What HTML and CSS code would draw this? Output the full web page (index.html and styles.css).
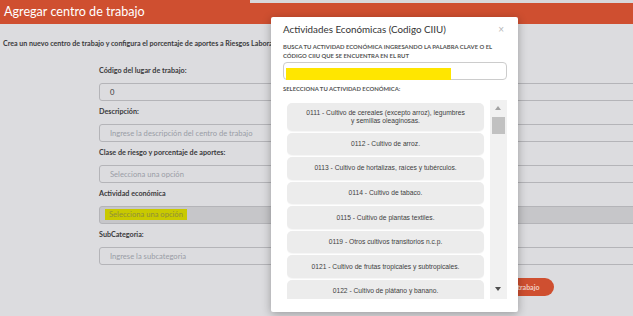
FILE: index.html
```html
<!DOCTYPE html>
<html lang="es">
<head>
    <meta charset="UTF-8">
    <meta name="viewport" content="width=device-width, initial-scale=1.0">
    <title>Agregar centro de trabajo</title>
    <link rel="stylesheet" href="styles.css">
</head>
<body>

<header class="topbar">
    <h1>Agregar centro de trabajo</h1>
</header>

<main class="page">
    <p class="intro">Crea un nuevo centro de trabajo y configura el porcentaje de aportes a Riesgos Laborales</p>

    <!-- Formulario del centro de trabajo -->
    <form class="form">
        <div class="field">
            <label>Código del lugar de trabajo:</label>
            <div class="input">0</div>
        </div>
        <div class="field">
            <label>Descripción:</label>
            <div class="input placeholder">Ingrese la descripción del centro de trabajo</div>
        </div>
        <div class="field">
            <label>Clase de riesgo y porcentaje de aportes:</label>
            <div class="input placeholder">Selecciona una opción</div>
        </div>
        <div class="field">
            <label>Actividad económica</label>
            <div class="input input-active"><span class="marker">Selecciona una opción</span></div>
        </div>
        <div class="field">
            <label>SubCategoria:</label>
            <div class="input placeholder">Ingrese la subcategoria</div>
        </div>
        <div class="actions">
            <button type="button" class="save-button">Agregar centro de trabajo</button>
        </div>
    </form>
</main>

<!-- Modal de actividades económicas -->
<div class="modal">
    <div class="modal-head">
        <h2>Actividades Económicas (Codigo CIIU)</h2>
        <span class="close">&times;</span>
    </div>
    <p class="hint">BUSCA TU ACTIVIDAD ECONÓMICA INGRESANDO LA PALABRA CLAVE O EL CÓDIGO CIIU QUE SE ENCUENTRA EN EL RUT</p>
    <div class="search"><span class="search-mark"></span></div>
    <p class="hint hint-list">SELECCIONA TU ACTIVIDAD ECONÓMICA:</p>

    <div class="list-box">
        <div class="list">
            <div class="item">0111 - Cultivo de cereales (excepto arroz), legumbres y semillas oleaginosas.</div>
            <div class="item">0112 - Cultivo de arroz.</div>
            <div class="item">0113 - Cultivo de hortalizas, raíces y tubérculos.</div>
            <div class="item">0114 - Cultivo de tabaco.</div>
            <div class="item">0115 - Cultivo de plantas textiles.</div>
            <div class="item">0119 - Otros cultivos transitorios n.c.p.</div>
            <div class="item">0121 - Cultivo de frutas tropicales y subtropicales.</div>
            <div class="item">0122 - Cultivo de plátano y banano.</div>
        </div>
        <div class="scrollbar">
            <span class="arrow arrow-up"></span>
            <span class="thumb"></span>
            <span class="arrow arrow-down"></span>
        </div>
    </div>
</div>

</body>
</html>
```

FILE: styles.css
```css
body {
    margin: 0;
    font-family: Lato, "Open Sans", sans-serif;
    background-color: #dcdcdf;
    overflow: hidden;
    height: 316px;
}
.topbar {
    height: 24px;
    background: linear-gradient(to right, #cf4f30 250px, #d8d8db 250px) top / 100% 3px no-repeat, #cf4f30;
}
.topbar h1 {
    margin: 0;
    padding: 3px 0 0 4px;
    font-size: 12.6px;
    font-weight: 400;
    line-height: 18px;
    color: #fff;
}
.page {
    padding-top: 15px;
}
.intro {
    margin: 0 0 0 3px;
    font-size: 7.1px;
    font-weight: 700;
    color: #3a3a3c;
    line-height: 10px;
    white-space: nowrap;
}
.form {
    margin: 17px 0 0 99px;
    width: 600px;
}
.field label {
    display: block;
    font-size: 7.2px;
    font-weight: 700;
    color: #3a3a3c;
    line-height: 10px;
    margin-bottom: 7px;
}
.input {
    height: 18px;
    box-sizing: border-box;
    border: 1px solid #b4b4b8;
    border-radius: 3px;
    padding-left: 10px;
    font-size: 7.6px;
    line-height: 16px;
    color: #3a3a3c;
    margin-bottom: 6px;
}
.placeholder {
    color: #9a9ca6;
}
.input-active {
    background-color: #c6c6c9;
    padding-left: 5px;
}
.marker {
    display: inline-block;
    background-color: #c9c900;
    color: #8f8f3a;
    padding: 0 4px;
    line-height: 11px;
    vertical-align: 1px;
}
.actions {
    padding-top: 3px;
}
.save-button {
    margin-left: 345px;
    height: 18px;
    padding: 0 15px 0 16px;
    border: none;
    border-radius: 9px;
    background-color: #cf4f30;
    color: #f2cfc4;
    font-family: Lato, sans-serif;
    font-size: 7px;
    font-weight: 700;
}
.modal {
    position: absolute;
    left: 271px;
    top: 17px;
    width: 247px;
    height: 295px;
    background-color: #fff;
    border-radius: 2px;
    box-shadow: 0 2px 10px rgba(0, 0, 0, 0.3);
    box-sizing: border-box;
    padding: 0 11px 0 12px;
}
.modal-head {
    display: flex;
    justify-content: space-between;
    align-items: center;
    height: 24px;
}
.modal-head h2 {
    margin: 0;
    font-size: 9.8px;
    font-weight: 400;
    color: #333;
}
.close {
    font-family: Arial, "Liberation Sans", sans-serif;
    font-size: 10px;
    color: #b8b8b8;
    margin-right: 3px;
}
.hint {
    margin: 2px 0 0;
    font-size: 5.9px;
    font-weight: 700;
    color: #555;
    line-height: 8.5px;
}
.search {
    margin-top: 2px;
    height: 18px;
    border: 1px solid #ccc;
    border-radius: 4px;
    box-sizing: border-box;
    padding: 5px 0 0 2px;
}
.search-mark {
    display: block;
    width: 165px;
    height: 12px;
    background-color: #ffe600;
}
.hint-list {
    margin-top: 5px;
}
.list-box {
    display: flex;
    margin: 6px 0 0 4px;
    height: 199px;
    overflow: hidden;
}
.list {
    width: 197px;
    padding-top: 3px;
    margin-right: 6px;
}
.item {
    display: flex;
    align-items: center;
    justify-content: center;
    min-height: 22.6px;
    padding: 6px 18px;
    box-sizing: border-box;
    margin-bottom: 2px;
    background-color: #ececec;
    border-radius: 5px;
    box-shadow: 0 1px 1px rgba(0, 0, 0, 0.04);
    font-family: "Liberation Sans", Arial, sans-serif;
    font-size: 6.7px;
    line-height: 8px;
    color: #3e3e3e;
    text-align: center;
}
.scrollbar {
    position: relative;
    width: 17px;
    background-color: #f1f1f1;
}
.thumb {
    position: absolute;
    left: 2px;
    top: 17px;
    width: 13px;
    height: 17px;
    background-color: #c1c1c1;
}
.arrow {
    position: absolute;
    left: 5px;
    width: 0;
    height: 0;
    border-left: 3.5px solid transparent;
    border-right: 3.5px solid transparent;
}
.arrow-up {
    top: 6px;
    border-bottom: 4px solid #a3a3a3;
}
.arrow-down {
    bottom: 8px;
    border-top: 4px solid #505050;
}
```
